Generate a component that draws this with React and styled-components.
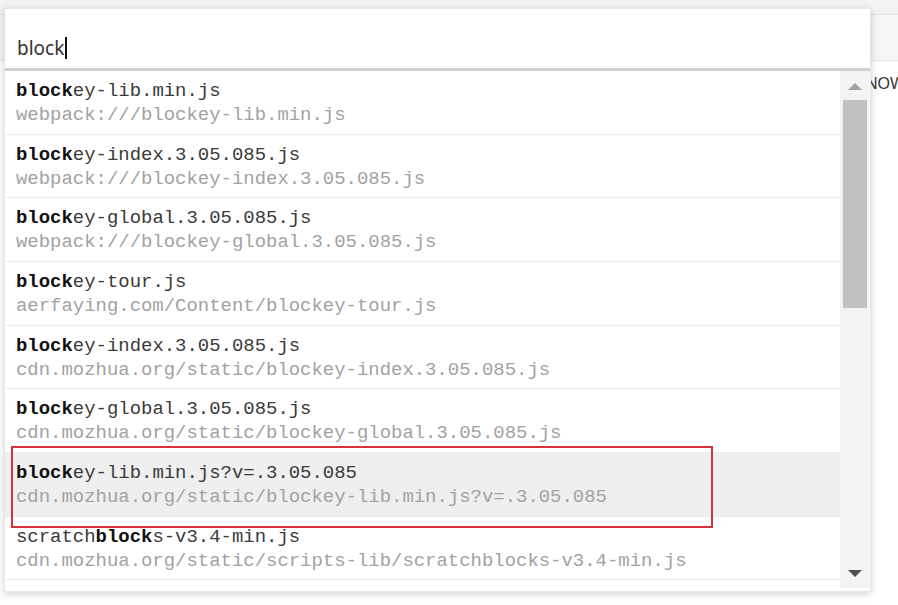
import React from "react";
import styled, { createGlobalStyle } from "styled-components";

const Global = createGlobalStyle`
  html, body { margin: 0; padding: 0; background: #fff; }
  body { width: 898px; height: 605px; overflow: hidden; font-family: "Noto Sans", "Liberation Sans", sans-serif; }
  * { box-sizing: border-box; }
`;

const Page = styled.div`
  position: relative;
  width: 898px;
  height: 605px;
  display: flex;
  flex-direction: column;
  background: #fff;
`;

const TopStrip = styled.div`
  height: 15px;
  background: #f3f3f3;
  border-bottom: 1px solid #e2e2e2;
`;

const Toolbar = styled.div`
  height: 46px;
  background: #f6f6f6;
  border-bottom: 1px solid #e4e4e4;
  display: flex;
  align-items: center;
  font-family: "Liberation Sans", sans-serif;
  font-size: 15px;
  color: #444;
`;

const ToolbarLabel = styled.span`
  margin-left: -40px;
`;

const Content = styled.div`
  flex: 1;
  display: grid;
  grid-template-columns: 866px 1fr;
  padding-top: 14px;
`;

const NowText = styled.div`
  font-family: "Liberation Sans", sans-serif;
  font-size: 16px;
  color: #333;
  white-space: nowrap;
  overflow: hidden;
`;

const Popup = styled.div`
  position: absolute;
  left: 4px;
  top: 8px;
  width: 867px;
  height: 584px;
  background: #fff;
  border: 1px solid #e6e6e6;
  box-shadow: 0 2px 8px rgba(0, 0, 0, 0.18);
  display: flex;
  flex-direction: column;
`;

const InputArea = styled.div`
  height: 62px;
  flex: none;
  display: flex;
  align-items: flex-end;
  padding: 0 0 8px 12px;
  border-bottom: 3px solid #cfcfcf;
`;

const InputText = styled.span`
  font-family: "Noto Sans", "Open Sans", sans-serif;
  font-size: 19px;
  line-height: 24px;
  color: #333;
  display: inline-flex;
  align-items: center;
`;

const Caret = styled.span`
  display: inline-block;
  width: 2px;
  height: 22px;
  background: #111;
  margin-left: 1px;
`;

const ListArea = styled.div`
  flex: 1;
  display: flex;
  min-height: 0;
`;

const Rows = styled.div`
  flex: 1;
  display: flex;
  flex-direction: column;
`;

const Row = styled.div`
  height: 63.67px;
  flex: none;
  padding: 8px 0 0 11px;
  border-bottom: 1px solid #ececec;
  background: ${(p) => (p.$active ? "#efefef" : "#fff")};
  font-family: "Liberation Mono", "DejaVu Sans Mono", monospace;
  font-size: 18.95px;
  line-height: 24px;
  white-space: nowrap;
`;

const Title = styled.div`
  color: #3a3a3a;
`;

const Match = styled.b`
  color: #111;
  font-weight: 700;
`;

const Sub = styled.div`
  color: #a2a2a2;
`;

const Scrollbar = styled.div`
  width: 29px;
  margin-right: 1px;
  margin-bottom: 3px;
  background: #f3f3f3;
  display: flex;
  flex-direction: column;
  align-items: center;
`;

const Arrow = styled.div`
  height: 29px;
  width: 100%;
  display: flex;
  align-items: center;
  justify-content: center;
`;

const Thumb = styled.div`
  width: 24px;
  height: 208px;
  background: #c1c1c1;
  margin-left: 1px;
`;

const Spacer = styled.div`
  flex: 1;
`;

const Highlight = styled.div`
  position: absolute;
  left: 11px;
  top: 446px;
  width: 702px;
  height: 82px;
  border: 2px solid #d8323c;
  pointer-events: none;
`;

const items = [
  { pre: "", m: "block", post: "ey-lib.min.js", sub: "webpack:///blockey-lib.min.js" },
  { pre: "", m: "block", post: "ey-index.3.05.085.js", sub: "webpack:///blockey-index.3.05.085.js" },
  { pre: "", m: "block", post: "ey-global.3.05.085.js", sub: "webpack:///blockey-global.3.05.085.js" },
  { pre: "", m: "block", post: "ey-tour.js", sub: "aerfaying.com/Content/blockey-tour.js" },
  { pre: "", m: "block", post: "ey-index.3.05.085.js", sub: "cdn.mozhua.org/static/blockey-index.3.05.085.js" },
  { pre: "", m: "block", post: "ey-global.3.05.085.js", sub: "cdn.mozhua.org/static/blockey-global.3.05.085.js" },
  { pre: "", m: "block", post: "ey-lib.min.js?v=.3.05.085", sub: "cdn.mozhua.org/static/blockey-lib.min.js?v=.3.05.085", active: true },
  { pre: "scratch", m: "block", post: "s-v3.4-min.js", sub: "cdn.mozhua.org/static/scripts-lib/scratchblocks-v3.4-min.js" },
];

export default function App() {
  return (
    <Page>
      <Global />
      <TopStrip />
      <Toolbar>
        <ToolbarLabel>Filter</ToolbarLabel>
      </Toolbar>
      <Content>
        <div />
        <NowText>NOW</NowText>
      </Content>
      <Popup>
        <InputArea>
          <InputText>
            block
            <Caret />
          </InputText>
        </InputArea>
        <ListArea>
          <Rows>
            {items.map((it, i) => (
              <Row key={i} $active={it.active}>
                <Title>
                  {it.pre}
                  <Match>{it.m}</Match>
                  {it.post}
                </Title>
                <Sub>{it.sub}</Sub>
              </Row>
            ))}
          </Rows>
          <Scrollbar>
            <Arrow>
              <svg width="14" height="8" viewBox="0 0 14 8">
                <path d="M0 8 L7 1 L14 8 Z" fill="#a3a3a3" />
              </svg>
            </Arrow>
            <Thumb />
            <Spacer />
            <Arrow>
              <svg width="14" height="8" viewBox="0 0 14 8">
                <path d="M0 0 L14 0 L7 7 Z" fill="#505050" />
              </svg>
            </Arrow>
          </Scrollbar>
        </ListArea>
      </Popup>
      <Highlight />
    </Page>
  );
}
